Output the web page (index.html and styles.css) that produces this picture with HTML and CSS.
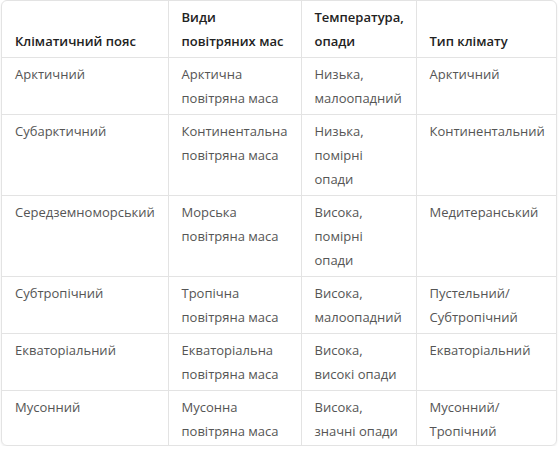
FILE: index.html
```html
<!DOCTYPE html>
<html lang="uk">
<head>
<meta charset="utf-8">
<link rel="stylesheet" href="styles.css">
</head>
<body>
<div class="wrap">
<table class="climate">
<colgroup>
<col class="c1"><col class="c2"><col class="c3"><col class="c4">
</colgroup>
<thead>
<tr><th>Кліматичний пояс</th><th>Види повітряних мас</th><th>Температура, опади</th><th>Тип клімату</th></tr>
</thead>
<tbody>
<tr><td>Арктичний</td><td>Арктична повітряна маса</td><td>Низька, малоопадний</td><td>Арктичний</td></tr>
<tr><td>Субарктичний</td><td>Континентальна повітряна маса</td><td>Низька, помірні опади</td><td>Континентальний</td></tr>
<tr><td>Середземноморський</td><td>Морська повітряна маса</td><td>Висока, помірні опади</td><td>Медитеранський</td></tr>
<tr><td>Субтропічний</td><td>Тропічна повітряна маса</td><td>Висока, малоопадний</td><td>Пустельний/ Субтропічний</td></tr>
<tr><td>Екваторіальний</td><td>Екваторіальна повітряна маса</td><td>Висока, високі опади</td><td>Екваторіальний</td></tr>
<tr class="last"><td>Мусонний</td><td>Мусонна повітряна маса</td><td>Висока, значні опади</td><td>Мусонний/ Тропічний</td></tr>
</tbody>
</table>
</div>
</body>
</html>
```
FILE: styles.css
```css
html, body { margin: 0; padding: 0; background: #fff; }
.wrap {
  margin: 0 0 0 1px;
  width: 554px;
  border: 1px solid #e3e3e3;
  border-radius: 6px;
  overflow: hidden;
  box-shadow: 0 1px 2px rgba(0,0,0,0.08);
}
.climate {
  border-collapse: collapse;
  table-layout: fixed;
  width: 100%;
  font-family: "Open Sans", "Noto Sans", sans-serif;
  font-size: 13px;
  line-height: 24px;
  color: #555;
}
.c1 { width: 166px; }
.c2 { width: 133px; }
.c3 { width: 115px; }
.c4 { width: 140px; }
.climate th, .climate td {
  padding: 4px 11px 4px 13px;
  text-align: left;
  vertical-align: top;
  border-left: 1px solid #e3e3e3;
  border-top: 1px solid #e3e3e3;
}
.climate th:first-child, .climate td:first-child { border-left: none; }
.climate thead th {
  border-top: none;
  vertical-align: bottom;
  font-weight: 600;
  color: #222;
}
.climate .last td { padding-bottom: 2px; }
```
